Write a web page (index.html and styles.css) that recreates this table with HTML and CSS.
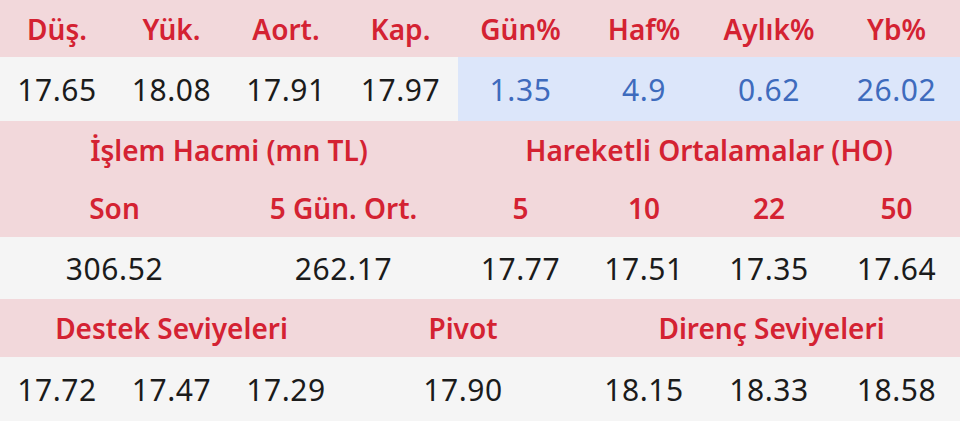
FILE: index.html
```html
<!DOCTYPE html>
<html lang="tr">
<head>
<meta charset="utf-8">
<link rel="stylesheet" href="styles.css">
</head>
<body>
<div class="table">
  <div class="row head">
    <div class="cell">Düş.</div>
    <div class="cell">Yük.</div>
    <div class="cell">Aort.</div>
    <div class="cell">Kap.</div>
    <div class="cell">Gün%</div>
    <div class="cell">Haf%</div>
    <div class="cell">Aylık%</div>
    <div class="cell">Yb%</div>
  </div>
  <div class="row data">
    <div class="cell">17.65</div>
    <div class="cell">18.08</div>
    <div class="cell">17.91</div>
    <div class="cell">17.97</div>
    <div class="cell blue">1.35</div>
    <div class="cell blue">4.9</div>
    <div class="cell blue">0.62</div>
    <div class="cell blue">26.02</div>
  </div>

  <div class="row head">
    <div class="cell span4">İşlem Hacmi (mn TL)</div>
    <div class="cell span4">Hareketli Ortalamalar (HO)</div>
  </div>
  <div class="row head">
    <div class="cell span2">Son</div>
    <div class="cell span2">5 Gün. Ort.</div>
    <div class="cell">5</div>
    <div class="cell">10</div>
    <div class="cell">22</div>
    <div class="cell">50</div>
  </div>
  <div class="row data data2">
    <div class="cell span2">306.52</div>
    <div class="cell span2">262.17</div>
    <div class="cell">17.77</div>
    <div class="cell">17.51</div>
    <div class="cell">17.35</div>
    <div class="cell">17.64</div>
  </div>

  <div class="row head">
    <div class="cell span3">Destek Seviyeleri</div>
    <div class="cell span2">Pivot</div>
    <div class="cell span3">Direnç Seviyeleri</div>
  </div>
  <div class="row data">
    <div class="cell">17.72</div>
    <div class="cell">17.47</div>
    <div class="cell">17.29</div>
    <div class="cell span2">17.90</div>
    <div class="cell">18.15</div>
    <div class="cell">18.33</div>
    <div class="cell">18.58</div>
  </div>
</div>
</body>
</html>
```

FILE: styles.css
```css
html, body {
  margin: 0;
  padding: 0;
  background: #ffffff;
}

body {
  font-family: "Noto Sans", "Open Sans", sans-serif;
  width: 960px;
  height: 424px;
  overflow: hidden;
}

.table {
  display: flex;
  flex-direction: column;
}

.row {
  display: grid;
  grid-template-columns: 114px 115px 114px 115px 125px 122px 128px 127px;
}

.cell {
  display: flex;
  align-items: center;
  justify-content: center;
  white-space: nowrap;
}

.head {
  background: #f2d8db;
  height: 58px;
  color: #d42232;
  font-weight: 600;
  font-size: 28px;
}

.table > .head:first-child {
  height: 57px;
}

.data {
  background: #f5f5f5;
  height: 64px;
  color: #1b1b1b;
  font-weight: 400;
  font-size: 30px;
  letter-spacing: 0.6px;
}

.data2 {
  height: 62px;
}

.blue {
  background: #dce6fa;
  color: #3e6bbd;
}

.span2 { grid-column: span 2; }
.span3 { grid-column: span 3; }
.span4 { grid-column: span 4; }
```
